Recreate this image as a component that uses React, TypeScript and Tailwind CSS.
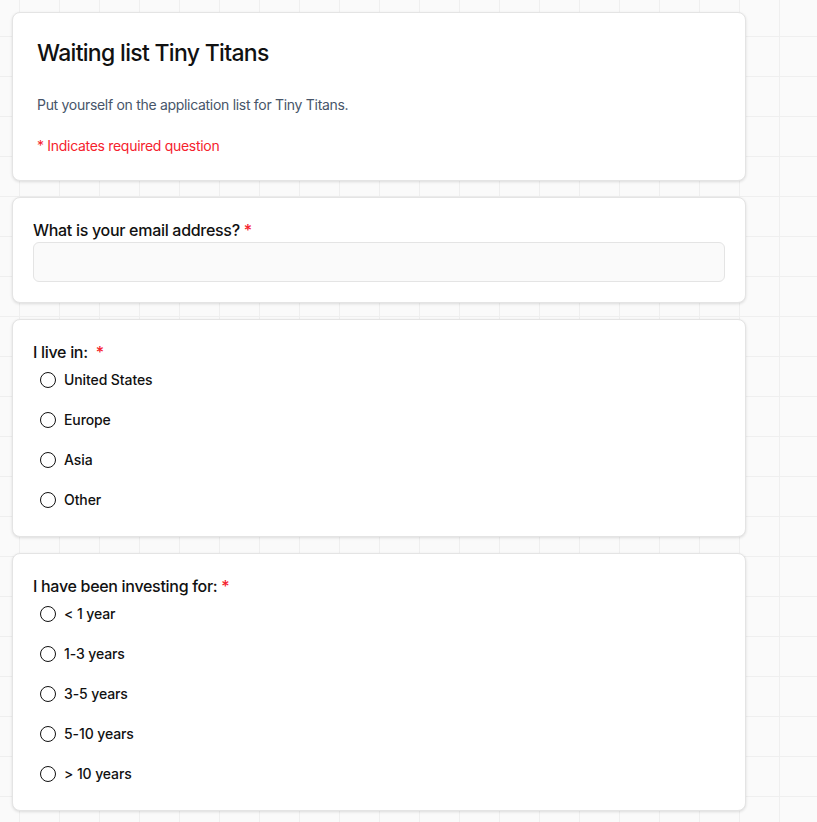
import React from "react";

const font = { fontFamily: "Inter, 'Liberation Sans', sans-serif" };

const Required = () => <span className="ml-1 text-[#f5222d]">*</span>;

const Card = ({ children, className = "" }: { children: React.ReactNode; className?: string }) => (
  <div className={`rounded-lg border border-[#e4e4e4] bg-white shadow-[0_1px_3px_rgba(0,0,0,0.12)] ${className}`}>
    {children}
  </div>
);

const RadioGroup = ({ name, options }: { name: string; options: string[] }) => (
  <div className="mt-1 flex flex-col gap-4 pl-[7px]">
    {options.map((opt) => (
      <label key={opt} className="flex h-6 items-center gap-2 text-sm font-medium tracking-[-0.1px] text-[#111]">
        <span className="h-[16px] w-[16px] rounded-full border-[1.5px] border-[#111] bg-white" />
        <span>{opt}</span>
        <input type="radio" name={name} className="hidden" />
      </label>
    ))}
  </div>
);

export default function App() {
  return (
    <div
      style={font}
      className="min-h-screen bg-[#fafafa] bg-[linear-gradient(to_right,#efefef_1px,transparent_1px),linear-gradient(to_bottom,#efefef_1px,transparent_1px)] bg-[size:40px_40px] bg-[position:19px_36px] px-3 py-3"
    >
      <div className="flex w-[734px] flex-col gap-4">
        <Card className="p-6">
          <h1 className="text-[23px] font-medium leading-8 tracking-[-0.03em] text-[#111]">Waiting list Tiny Titans</h1>
          <p className="mt-[26px] text-sm leading-5 tracking-[-0.3px] text-[#475569]">
            Put yourself on the application list for Tiny Titans.
          </p>
          <p className="mt-[21px] text-sm leading-5 tracking-[-0.3px] text-[#f5222d]">* Indicates required question</p>
        </Card>

        <Card className="px-5 pt-5 pb-5">
          <div className="text-base font-medium leading-6 tracking-[-0.3px] text-[#111]">
            What is your email address?<Required />
          </div>
          <input
            type="email"
            className="h-10 w-full rounded-md border border-[#e4e4e4] bg-[#fafafa] px-3 text-sm outline-none"
          />
        </Card>

        <Card className="px-5 pt-5 pb-6">
          <div className="text-base font-medium leading-6 tracking-[-0.3px] text-[#111]">
            I live in: <Required />
          </div>
          <RadioGroup name="live" options={["United States", "Europe", "Asia", "Other"]} />
        </Card>

        <Card className="px-5 pt-5 pb-6">
          <div className="text-base font-medium leading-6 tracking-[-0.3px] text-[#111]">
            I have been investing for:<Required />
          </div>
          <RadioGroup name="invest" options={["< 1 year", "1-3 years", "3-5 years", "5-10 years", "> 10 years"]} />
        </Card>
      </div>
    </div>
  );
}
